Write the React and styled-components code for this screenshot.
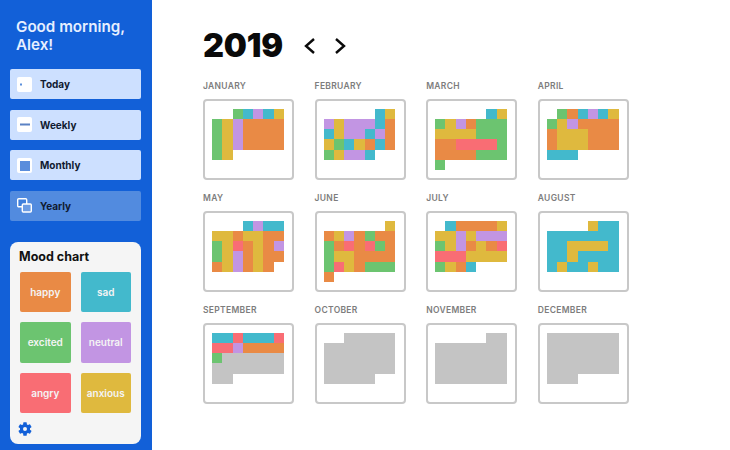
import React from 'react';
import styled, { createGlobalStyle } from 'styled-components';

const GlobalStyle = createGlobalStyle`
  html,
  body {
    margin: 0;
    padding: 0;
    background: #fff;
  }
`;

const COLORS = {
  G: '#6cc470',
  T: '#43b9cc',
  P: '#c295e3',
  Y: '#dfb93e',
  O: '#e98a45',
  R: '#f96d74',
  X: '#c4c4c4',
};

const MONTHS = [
  { name: 'January', rows: ['..GTPTY', 'GYPOOOO', 'GYPOOOO', 'GYPOOOO', 'GY.....'] },
  { name: 'February', rows: ['.....TY', 'PYPPPTO', 'TYPPTPO', 'YGTYOTO', 'GYPPT..'] },
  { name: 'March', rows: ['.....TY', 'GYPOGGG', 'YYYYGGG', 'OORRRRG', 'OOOOGGG', 'G......'] },
  { name: 'April', rows: ['.GOTPTY', 'GYPOOOO', 'OYYYOOO', 'OYYYOOO', 'TTT....'] },
  { name: 'May', rows: ['...TPTT', 'YYOYYOO', 'GYROYOP', 'GYPOYOO', 'OYPOYO.'] },
  { name: 'June', rows: ['......Y', 'OYPOGOO', 'GORORGO', 'GYYOOOO', 'GRYOGGG', 'O......'] },
  { name: 'July', rows: ['.TOOOOY', 'YYPYPPP', 'GYPOYOR', 'RRRYYYY', 'GYOT...'] },
  { name: 'August', rows: ['....YTT', 'TTTTTTT', 'TTYYYYT', 'TTYTTTT', 'TYTTYTT'] },
  { name: 'September', rows: ['TTRTTTR', 'RRPOOOO', 'GXXXXXX', 'XXXXXXX', 'XX.....'] },
  { name: 'October', rows: ['..XXXXX', 'XXXXXXX', 'XXXXXXX', 'XXXXXXX', 'XXXXX..'] },
  { name: 'November', rows: ['.....XX', 'XXXXXXX', 'XXXXXXX', 'XXXXXXX', 'XXXXXXX'] },
  { name: 'December', rows: ['XXXXXXX', 'XXXXXXX', 'XXXXXXX', 'XXXXXXX', 'XXX....'] },
];

const MOODS = [
  { label: 'happy', color: COLORS.O },
  { label: 'sad', color: COLORS.T },
  { label: 'excited', color: COLORS.G },
  { label: 'neutral', color: COLORS.P },
  { label: 'angry', color: COLORS.R },
  { label: 'anxious', color: COLORS.Y },
];

const Page = styled.div`
  display: flex;
  width: 730px;
  height: 450px;
  overflow: hidden;
  font-family: Inter, 'Liberation Sans', sans-serif;
`;

const Sidebar = styled.aside`
  box-sizing: border-box;
  display: flex;
  flex-direction: column;
  width: 152px;
  height: 450px;
  padding: 18px 11px 6px 10px;
  background: #1260d8;
`;

const Greeting = styled.h1`
  margin: 0 0 15px 6px;
  font-size: 15.2px;
  font-weight: 600;
  line-height: 18px;
  color: #e6efff;
`;

const NavList = styled.nav`
  display: flex;
  flex-direction: column;
  gap: 10.5px;
`;

const NavItem = styled.div`
  display: flex;
  align-items: center;
  gap: 8px;
  height: 30px;
  padding-left: 7px;
  border-radius: 2px;
  font-size: 10px;
  font-weight: 700;
  color: #101a30;
  background: ${(p) => (p.$active ? '#528bdf' : '#cde0ff')};
`;

const IconBox = styled.span`
  display: flex;
  align-items: center;
  justify-content: center;
  width: 15px;
  height: 15px;
  border-radius: 2px;
  background: #fff;
`;

const MoodCard = styled.section`
  box-sizing: border-box;
  flex: 1;
  margin-top: 21px;
  padding: 9px 10px 0 10px;
  border-radius: 8px;
  background: #f5f5f5;
`;

const MoodTitle = styled.h2`
  margin: 0 0 9px -1px;
  font-size: 12.5px;
  font-weight: 700;
  line-height: 12px;
  color: #111;
`;

const MoodGrid = styled.div`
  display: grid;
  grid-template-columns: 50.5px 50.5px;
  grid-auto-rows: 40.5px;
  column-gap: 10px;
  row-gap: 10px;
`;

const MoodTile = styled.div`
  display: flex;
  align-items: center;
  justify-content: center;
  border-radius: 2px;
  font-size: 10px;
  font-weight: 600;
  color: #f4f4f4;
  background: ${(p) => p.$color};
`;

const GearButton = styled.div`
  display: flex;
  margin: 8px 0 0 -3px;
  color: #1260d8;
`;

const Main = styled.main`
  flex: 1;
  padding: 27px 0 0 51px;
`;

const YearBar = styled.header`
  display: flex;
  align-items: center;
  height: 38px;
  margin-bottom: 16px;
`;

const Year = styled.div`
  width: 100px;
  font-size: 32.5px;
  font-weight: 900;
  line-height: 38px;
  letter-spacing: -0.2px;
  color: #0a0a0a;
`;

const Arrows = styled.div`
  display: flex;
  gap: 16px;
  color: #0a0a0a;
`;

const MonthGrid = styled.div`
  display: grid;
  grid-template-columns: repeat(4, 91px);
  column-gap: 20.6px;
  row-gap: 13px;
`;

const MonthLabel = styled.div`
  height: 18px;
  font-size: 8.5px;
  font-weight: 600;
  line-height: 11px;
  letter-spacing: 0.3px;
  color: #7d7d7d;
`;

const MonthCard = styled.div`
  box-sizing: border-box;
  width: 91px;
  height: 81px;
  padding: 8px 7px;
  border: 2px solid #c8c8c8;
  border-radius: 4px;
`;

const CellGrid = styled.div`
  display: grid;
  grid-template-columns: repeat(7, 10.25px);
  grid-auto-rows: 10.15px;
`;

const Cell = styled.div`
  background: ${(p) => p.$color || 'transparent'};
`;

const TodayIcon = () => (
  <IconBox>
    <svg width="15" height="15" viewBox="0 0 15 15">
      <rect x="3" y="6.5" width="2" height="2" fill="#5b8fdc" />
    </svg>
  </IconBox>
);

const WeeklyIcon = () => (
  <IconBox>
    <svg width="15" height="15" viewBox="0 0 15 15">
      <rect x="3" y="6.5" width="10" height="2" fill="#5b82c4" />
    </svg>
  </IconBox>
);

const MonthlyIcon = () => (
  <IconBox>
    <svg width="15" height="15" viewBox="0 0 15 15">
      <rect x="3" y="3" width="10" height="10" fill="#5a8ddc" />
    </svg>
  </IconBox>
);

const YearlyIcon = () => (
  <svg width="15" height="15" viewBox="0 0 15 15" fill="none" stroke="#fff" strokeWidth="1.4">
    <rect x="0.7" y="0.7" width="9" height="8" rx="1" fill="#3f7fdc" />
    <rect x="5.3" y="6" width="9" height="8" rx="1" fill="#6c9ce4" />
  </svg>
);

const GearIcon = () => (
  <svg width="16" height="16" viewBox="0 0 24 24" fill="currentColor">
    <path fillRule="evenodd" d="M19.43 12.98c.04-.32.07-.64.07-.98s-.03-.66-.07-.98l2.11-1.65a.5.5 0 0 0 .12-.64l-2-3.46a.5.5 0 0 0-.61-.22l-2.49 1a7.3 7.3 0 0 0-1.69-.98l-.38-2.65A.49.49 0 0 0 14 2h-4a.49.49 0 0 0-.49.42l-.38 2.65c-.61.25-1.17.59-1.69.98l-2.49-1a.49.49 0 0 0-.61.22l-2 3.46a.49.49 0 0 0 .12.64l2.11 1.65c-.04.32-.07.65-.07.98s.03.66.07.98l-2.11 1.65a.5.5 0 0 0-.12.64l2 3.46c.12.22.39.3.61.22l2.49-1c.52.4 1.08.73 1.69.98l.38 2.65c.03.24.24.42.49.42h4c.25 0 .46-.18.49-.42l.38-2.65a7.7 7.7 0 0 0 1.69-.98l2.49 1c.23.09.49 0 .61-.22l2-3.46a.5.5 0 0 0-.12-.64l-2.11-1.65ZM12 15a3 3 0 1 1 0-6 3 3 0 0 1 0 6Z" />
  </svg>
);

const Chevron = ({ flip }) => (
  <svg width="14" height="18" viewBox="0 0 14 18" fill="none" stroke="currentColor" strokeWidth="2.4">
    <path d={flip ? 'M3 2l8 7-8 7' : 'M11 2L3 9l8 7'} />
  </svg>
);

const MonthTile = ({ name, rows }) => (
  <div>
    <MonthLabel>{name.toUpperCase()}</MonthLabel>
    <MonthCard>
      <CellGrid>
        {rows.join('').split('').map((c, i) => (
          <Cell key={i} $color={COLORS[c]} />
        ))}
      </CellGrid>
    </MonthCard>
  </div>
);

const App = () => (
  <Page>
    <GlobalStyle />
    <Sidebar>
      <Greeting>
        Good morning,
        <br />
        Alex!
      </Greeting>
      <NavList>
        <NavItem>
          <TodayIcon />
          Today
        </NavItem>
        <NavItem>
          <WeeklyIcon />
          Weekly
        </NavItem>
        <NavItem>
          <MonthlyIcon />
          Monthly
        </NavItem>
        <NavItem $active>
          <YearlyIcon />
          Yearly
        </NavItem>
      </NavList>
      <MoodCard>
        <MoodTitle>Mood chart</MoodTitle>
        <MoodGrid>
          {MOODS.map((m) => (
            <MoodTile key={m.label} $color={m.color}>
              {m.label}
            </MoodTile>
          ))}
        </MoodGrid>
        <GearButton>
          <GearIcon />
        </GearButton>
      </MoodCard>
    </Sidebar>
    <Main>
      <YearBar>
        <Year>2019</Year>
        <Arrows>
          <Chevron />
          <Chevron flip />
        </Arrows>
      </YearBar>
      <MonthGrid>
        {MONTHS.map((m) => (
          <MonthTile key={m.name} name={m.name} rows={m.rows} />
        ))}
      </MonthGrid>
    </Main>
  </Page>
);

export default App;
